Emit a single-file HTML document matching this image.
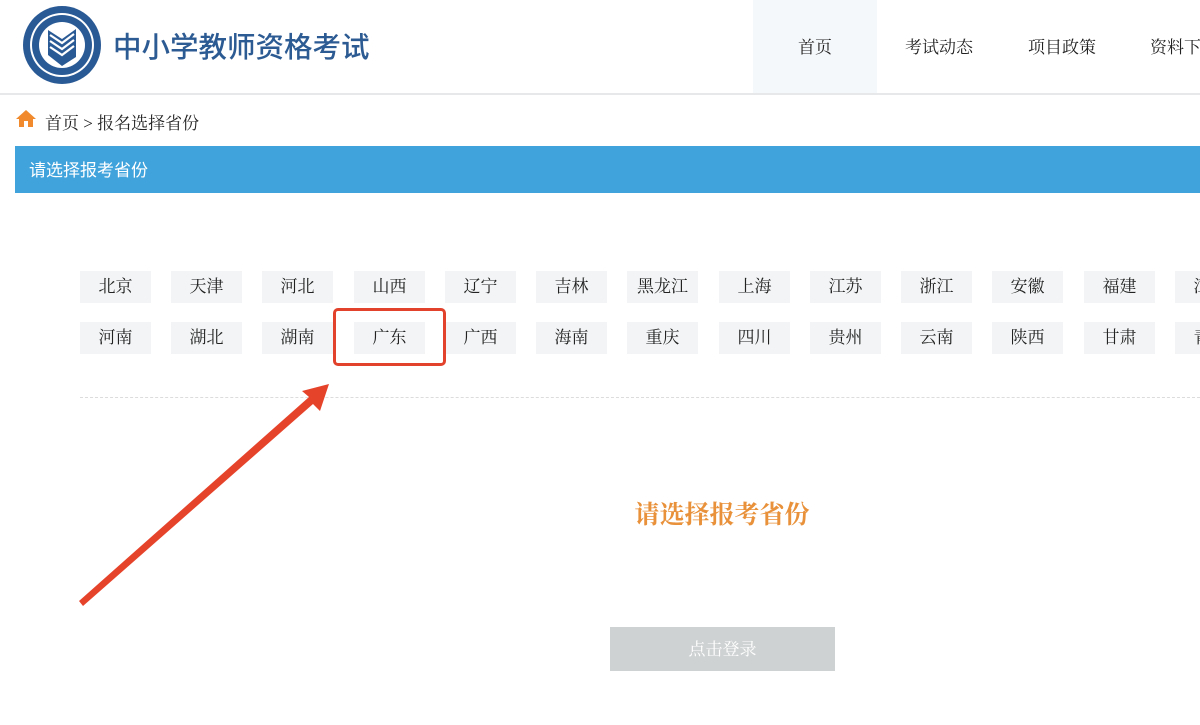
<!DOCTYPE html>
<html><head><meta charset="utf-8"><style>
*{margin:0;padding:0;box-sizing:border-box}
body{width:1200px;height:725px;overflow:hidden;background:#fff;position:relative;font-family:"Liberation Serif","Noto Serif CJK SC",serif;color:#222}
.a{position:absolute}
.nav{top:1px;height:94px;line-height:94px;font-size:17px;color:#222;text-align:center;width:124px}
.p{position:absolute;width:71px;height:32px;background:#f2f4f5;font-size:17px;line-height:32px;text-align:center;color:#222;white-space:nowrap;overflow:hidden}
</style></head><body>
<div class="a" style="left:0;top:93px;width:1200px;height:2px;background:#e6e8ea"></div>
<div class="a" style="left:753px;top:0;width:124px;height:93px;background:#f5f8fa"></div>
<svg class="a" style="left:22px;top:5px" width="80" height="80" viewBox="0 0 80 80">
<circle cx="40" cy="40" r="39" fill="#2a5a95"/>
<circle cx="40" cy="40" r="32" fill="#fff"/>
<circle cx="40" cy="40" r="30" fill="#2a5a95"/>
<circle cx="40" cy="40" r="23" fill="#fff"/>
<path d="M26 25 L40 34 L54 24 L54 52 L40 61 L26 50 Z" fill="#2a5a95"/>
<path d="M28 30 L40 38 L52 29 M28 36 L40 44 L52 35 M28 42 L40 50 L52 41" stroke="#fff" stroke-width="2.2" fill="none"/>
</svg>
<div class="a" style="left:113px;top:25px;font-family:'Liberation Sans','Noto Sans CJK SC',sans-serif;font-size:28.5px;color:#2c5a92;font-weight:500">中小学教师资格考试</div>
<div class="a nav" style="left:753px">首页</div>
<div class="a nav" style="left:877px">考试动态</div>
<div class="a nav" style="left:1000px">项目政策</div>
<div class="a nav" style="left:1124px;text-align:left;padding-left:26px;width:100px">资料下载</div>
<svg class="a" style="left:15px;top:109px" width="22" height="20" viewBox="0 0 22 20"><path d="M11 1 L1 10 L4 10 L4 18 L9 18 L9 12 L13 12 L13 18 L18 18 L18 10 L21 10 Z" fill="#f08a2c"/></svg>
<div class="a" style="left:45px;top:109px;font-size:17px;color:#222">首页 &gt; 报名选择省份</div>
<div class="a" style="left:15px;top:146px;width:1185px;height:47px;background:#40a3dc;color:#fff;font-family:'Liberation Sans','Noto Sans CJK SC',sans-serif;font-size:17px;line-height:49px;padding-left:14px">请选择报考省份</div>
<div class="p" style="left:80px;top:271px">北京</div>
<div class="p" style="left:171px;top:271px">天津</div>
<div class="p" style="left:262px;top:271px">河北</div>
<div class="p" style="left:354px;top:271px">山西</div>
<div class="p" style="left:445px;top:271px">辽宁</div>
<div class="p" style="left:536px;top:271px">吉林</div>
<div class="p" style="left:627px;top:271px">黑龙江</div>
<div class="p" style="left:719px;top:271px">上海</div>
<div class="p" style="left:810px;top:271px">江苏</div>
<div class="p" style="left:901px;top:271px">浙江</div>
<div class="p" style="left:992px;top:271px">安徽</div>
<div class="p" style="left:1084px;top:271px">福建</div>
<div class="p" style="left:1175px;top:271px">江西</div>
<div class="p" style="left:80px;top:322px">河南</div>
<div class="p" style="left:171px;top:322px">湖北</div>
<div class="p" style="left:262px;top:322px">湖南</div>
<div class="p" style="left:354px;top:322px">广东</div>
<div class="p" style="left:445px;top:322px">广西</div>
<div class="p" style="left:536px;top:322px">海南</div>
<div class="p" style="left:627px;top:322px">重庆</div>
<div class="p" style="left:719px;top:322px">四川</div>
<div class="p" style="left:810px;top:322px">贵州</div>
<div class="p" style="left:901px;top:322px">云南</div>
<div class="p" style="left:992px;top:322px">陕西</div>
<div class="p" style="left:1084px;top:322px">甘肃</div>
<div class="p" style="left:1175px;top:322px">青海</div>
<div class="a" style="left:333px;top:308px;width:113px;height:58px;border:3px solid #e2412b;border-radius:5px"></div>
<div class="a" style="left:80px;top:397px;width:1120px;border-top:1px dashed #dcdcdc"></div>
<svg class="a" style="left:0;top:0" width="1200" height="725"><path d="M79 601 L83 606 L313 404 L320 411 L329 384 L302 391 L309 397 Z" fill="#e6432b"/></svg>
<div class="a" style="left:600px;top:495px;width:244px;text-align:center;font-size:25px;color:#e8913a;font-weight:bold">请选择报考省份</div>
<div class="a" style="left:610px;top:627px;width:225px;height:44px;background:#cfd2d3;color:#fff;font-size:17px;line-height:46px;text-align:center">点击登录</div>
</body></html>
